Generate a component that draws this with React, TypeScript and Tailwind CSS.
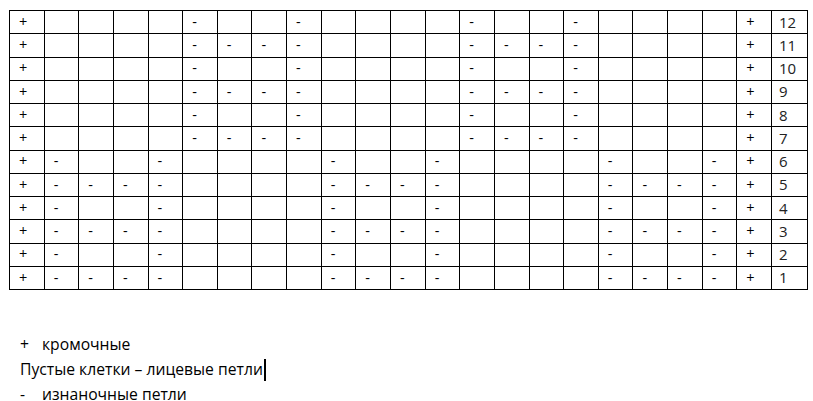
import React from "react";

const A = [6, 9, 14, 17];
const B = [6, 7, 8, 9, 14, 15, 16, 17];
const C = [2, 5, 10, 13, 18, 21];
const D = [2, 3, 4, 5, 10, 11, 12, 13, 18, 19, 20, 21];

const rows: { n: number; dashes: number[] }[] = [
  { n: 12, dashes: A },
  { n: 11, dashes: B },
  { n: 10, dashes: A },
  { n: 9, dashes: B },
  { n: 8, dashes: A },
  { n: 7, dashes: B },
  { n: 6, dashes: C },
  { n: 5, dashes: D },
  { n: 4, dashes: C },
  { n: 3, dashes: D },
  { n: 2, dashes: C },
  { n: 1, dashes: D },
];

export default function App() {
  return (
    <div
      className="w-[813px] h-[401px] bg-white text-black overflow-hidden"
      style={{ fontFamily: '"Open Sans", "Liberation Sans", sans-serif' }}
    >
      <div className="pt-[10px] pl-[9px]">
        <div className="grid w-[799px] grid-cols-[repeat(22,minmax(0,1fr))_36px] border-l border-t border-black text-[14.5px]">
          {rows.map((r) => (
            <React.Fragment key={r.n}>
              {Array.from({ length: 22 }, (_, i) => {
                const c = i + 1;
                let t = "";
                if (c === 1 || c === 22) t = "+";
                else if (r.dashes.includes(c)) t = "-";
                return (
                  <div
                    key={c}
                    className="h-[23.25px] border-r border-b border-black pl-[9px] flex items-center leading-none"
                  >
                    {t}
                  </div>
                );
              })}
              <div className="h-[23.25px] border-r border-b border-black pl-[7px] flex items-center leading-none text-[15px] text-[#222]">
                {r.n}
              </div>
            </React.Fragment>
          ))}
        </div>
      </div>
      <div className="mt-[42px] pl-[20px] text-[15.7px] leading-[25px]">
        <div className="flex">
          <span className="w-[22px]">+</span>
          <span>кромочные</span>
        </div>
        <div className="flex items-center">
          <span>Пустые клетки – лицевые петли</span>
          <span className="inline-block w-[2px] h-[22px] bg-black ml-[1px]" />
        </div>
        <div className="flex">
          <span className="w-[22px]">-</span>
          <span>изнаночные петли</span>
        </div>
      </div>
    </div>
  );
}
